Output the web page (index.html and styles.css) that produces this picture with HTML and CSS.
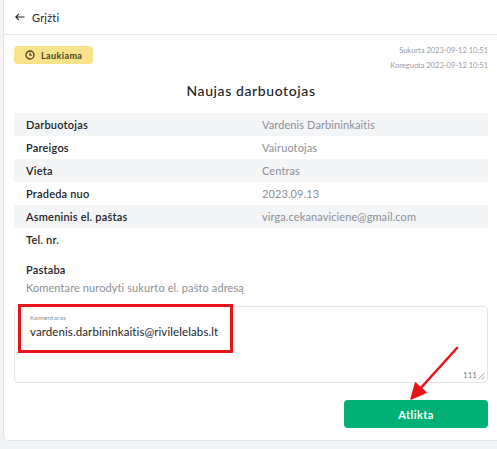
FILE: index.html
```html
<!DOCTYPE html>
<html lang="lt">
<head>
<meta charset="utf-8">
<title>Naujas darbuotojas</title>
<link rel="stylesheet" href="styles.css">
</head>
<body>
<div class="card">
  <div class="header">
    <span class="back-arrow">
      <svg width="10" height="8" viewBox="0 0 10 8"><path d="M9.5 4H1M4 0.8L0.8 4L4 7.2" fill="none" stroke="#222" stroke-width="1.1"/></svg>
    </span>
    <span class="back-text">Grįžti</span>
  </div>
  <div class="content">
    <div class="top">
      <span class="badge">
        <svg width="10" height="10" viewBox="0 0 10 10"><circle cx="5" cy="5" r="4" fill="none" stroke="#4a4226" stroke-width="1.3"/><path d="M5 2.8V5.2H6.8" fill="none" stroke="#4a4226" stroke-width="1.2"/></svg>
        Laukiama
      </span>
      <div class="dates">
        <div>Sukurta 2023-09-12 10:51</div>
        <div>Koreguota 2023-09-12 10:51</div>
      </div>
    </div>
    <h1 class="title">Naujas darbuotojas</h1>
    <div class="table">
      <div class="row alt"><span class="label">Darbuotojas</span><span class="value">Vardenis Darbininkaitis</span></div>
      <div class="row"><span class="label">Pareigos</span><span class="value">Vairuotojas</span></div>
      <div class="row alt"><span class="label">Vieta</span><span class="value">Centras</span></div>
      <div class="row"><span class="label">Pradeda nuo</span><span class="value">2023.09.13</span></div>
      <div class="row alt"><span class="label">Asmeninis el. paštas</span><span class="value">virga.cekanaviciene@gmail.com</span></div>
      <div class="row"><span class="label">Tel. nr.</span><span class="value"></span></div>
    </div>
    <div class="note">
      <div class="note-title">Pastaba</div>
      <div class="note-text">Komentare nurodyti sukurto el. pašto adresą</div>
    </div>
    <div class="field">
      <div class="field-label">Komentaras</div>
      <div class="field-value">vardenis.darbininkaitis@rivilelelabs.lt</div>
      <div class="counter">
        <span>111</span>
        <svg width="8" height="8" viewBox="0 0 8 8"><path d="M7.5 1L1 7.5M7.5 4.5L4.5 7.5" stroke="#999" stroke-width="0.9"/></svg>
      </div>
      <div class="highlight"></div>
    </div>
    <div class="actions">
      <button class="btn">Atlikta</button>
    </div>
  </div>
</div>
<svg class="arrow" width="497" height="449" viewBox="0 0 497 449">
  <path d="M457 348L419 390" stroke="#e8141c" stroke-width="2.6" stroke-linecap="round" fill="none"/>
  <path d="M411 399L415.5 383L426 392.5Z" fill="#e8141c" stroke="#e8141c" stroke-width="1.5" stroke-linejoin="round"/>
</svg>
</body>
</html>
```

FILE: styles.css
```css
html, body {
  margin: 0;
  padding: 0;
  overflow: hidden;
}
body {
  background: #f3f4f6;
  font-family: Lato, "Noto Sans", sans-serif;
  color: #1f2328;
  width: 497px;
  height: 449px;
  position: relative;
}
.card {
  margin-left: 3px;
  background: #fff;
  border: 1px solid #e4e5e8;
  border-top: none;
  border-right: none;
  border-radius: 0 0 0 5px;
  height: 441px;
  box-sizing: border-box;
}
.header {
  height: 35px;
  border-bottom: 1px solid #e6e7ea;
  display: flex;
  align-items: center;
  padding-left: 11px;
  gap: 7px;
  box-sizing: border-box;
}
.back-arrow {
  display: flex;
  align-items: center;
}
.back-text {
  font-size: 11px;
  color: #1f2328;
  letter-spacing: 0.2px;
}
.content {
  padding: 0 9px 0 10px;
}
.top {
  display: flex;
  justify-content: space-between;
  align-items: flex-start;
  padding-top: 8px;
}
.badge {
  margin-top: 3px;
  display: inline-flex;
  align-items: center;
  gap: 6px;
  height: 18px;
  padding: 0 11px 0 11px;
  background: #f8e38a;
  border-radius: 4px;
  font-size: 9px;
  font-weight: 700;
  color: #4a4226;
  letter-spacing: 0.4px;
}
.dates {
  text-align: right;
  font-size: 7.5px;
  line-height: 15px;
  color: #9a9ca1;
}
.title {
  margin: 8px 0 0;
  text-align: center;
  font-size: 14px;
  font-weight: 500;
  letter-spacing: 0.6px;
  color: #1f2328;
  line-height: 20px;
  height: 32px;
}
.table {
  display: flex;
  flex-direction: column;
}
.row {
  display: grid;
  grid-template-columns: 236px 1fr;
  height: 23px;
  align-items: center;
  padding-left: 12px;
  font-size: 11px;
}
.row.alt {
  background: #f4f5f7;
}
.label {
  font-weight: 600;
  color: #1f2328;
  letter-spacing: 0.2px;
}
.value {
  color: #8b8f96;
  letter-spacing: 0.1px;
}
.note {
  padding: 11px 0 0 12px;
}
.note-title {
  font-size: 11px;
  font-weight: 600;
  line-height: 16px;
  letter-spacing: 0.2px;
}
.note-text {
  margin-top: 2px;
  font-size: 11px;
  color: #8b8f96;
  line-height: 16px;
  letter-spacing: 0.1px;
}
.field {
  position: relative;
  margin-top: 10px;
  height: 77px;
  border: 1px solid #e3e4e7;
  border-radius: 4px;
  box-sizing: border-box;
  padding: 7px 0 0 15px;
}
.field-label {
  font-size: 6.5px;
  color: #888b90;
  line-height: 8px;
  letter-spacing: 0.2px;
}
.field-value {
  margin-top: 2px;
  font-size: 11.5px;
  color: #1f2328;
  line-height: 16px;
  letter-spacing: 0.1px;
}
.counter {
  position: absolute;
  right: 2px;
  bottom: 2px;
  display: flex;
  align-items: flex-end;
  font-size: 8px;
  color: #777;
  line-height: 9px;
}
.highlight {
  position: absolute;
  left: 3px;
  top: -3px;
  width: 215px;
  height: 49px;
  border: 3px solid #e8141c;
  box-sizing: border-box;
}
.actions {
  display: flex;
  justify-content: flex-end;
  margin-top: 17px;
}
.btn {
  width: 144px;
  height: 28px;
  border: none;
  border-radius: 4px;
  background: #00b074;
  color: #fff;
  font-family: Lato, "Noto Sans", sans-serif;
  font-size: 11px;
  font-weight: 700;
  letter-spacing: 0.4px;
}
.arrow {
  position: absolute;
  left: 0;
  top: 0;
  pointer-events: none;
}
```
